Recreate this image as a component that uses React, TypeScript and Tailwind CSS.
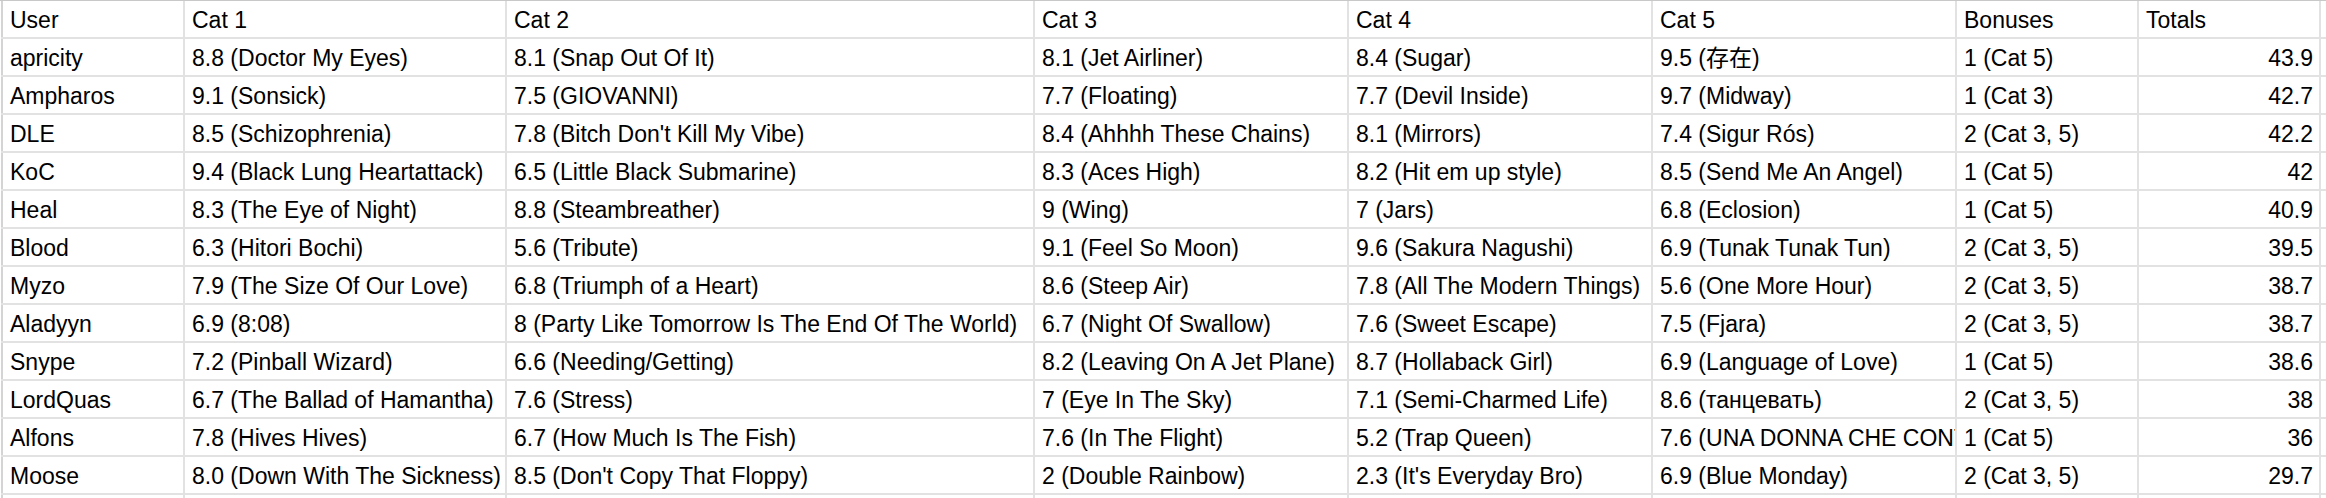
const columns = [
  { label: "User", width: "w-[182px]" },
  { label: "Cat 1", width: "w-[322px]" },
  { label: "Cat 2", width: "w-[528px]" },
  { label: "Cat 3", width: "w-[314px]" },
  { label: "Cat 4", width: "w-[304px]" },
  { label: "Cat 5", width: "w-[304px]" },
  { label: "Bonuses", width: "w-[182px]" },
  { label: "Totals", width: "w-[182px]" },
];

const rows: string[][] = [
  ["apricity", "8.8 (Doctor My Eyes)", "8.1 (Snap Out Of It)", "8.1 (Jet Airliner)", "8.4 (Sugar)", "9.5 (存在)", "1 (Cat 5)", "43.9"],
  ["Ampharos", "9.1 (Sonsick)", "7.5 (GIOVANNI)", "7.7 (Floating)", "7.7 (Devil Inside)", "9.7 (Midway)", "1 (Cat 3)", "42.7"],
  ["DLE", "8.5 (Schizophrenia)", "7.8 (Bitch Don't Kill My Vibe)", "8.4 (Ahhhh These Chains)", "8.1 (Mirrors)", "7.4 (Sigur Rós)", "2 (Cat 3, 5)", "42.2"],
  ["KoC", "9.4 (Black Lung Heartattack)", "6.5 (Little Black Submarine)", "8.3 (Aces High)", "8.2 (Hit em up style)", "8.5 (Send Me An Angel)", "1 (Cat 5)", "42"],
  ["Heal", "8.3 (The Eye of Night)", "8.8 (Steambreather)", "9 (Wing)", "7 (Jars)", "6.8 (Eclosion)", "1 (Cat 5)", "40.9"],
  ["Blood", "6.3 (Hitori Bochi)", "5.6 (Tribute)", "9.1 (Feel So Moon)", "9.6 (Sakura Nagushi)", "6.9 (Tunak Tunak Tun)", "2 (Cat 3, 5)", "39.5"],
  ["Myzo", "7.9 (The Size Of Our Love)", "6.8 (Triumph of a Heart)", "8.6 (Steep Air)", "7.8 (All The Modern Things)", "5.6 (One More Hour)", "2 (Cat 3, 5)", "38.7"],
  ["Aladyyn", "6.9 (8:08)", "8 (Party Like Tomorrow Is The End Of The World)", "6.7 (Night Of Swallow)", "7.6 (Sweet Escape)", "7.5 (Fjara)", "2 (Cat 3, 5)", "38.7"],
  ["Snype", "7.2 (Pinball Wizard)", "6.6 (Needing/Getting)", "8.2 (Leaving On A Jet Plane)", "8.7 (Hollaback Girl)", "6.9 (Language of Love)", "1 (Cat 5)", "38.6"],
  ["LordQuas", "6.7 (The Ballad of Hamantha)", "7.6 (Stress)", "7 (Eye In The Sky)", "7.1 (Semi-Charmed Life)", "8.6 (танцевать)", "2 (Cat 3, 5)", "38"],
  ["Alfons", "7.8 (Hives Hives)", "6.7 (How Much Is The Fish)", "7.6 (In The Flight)", "5.2 (Trap Queen)", "7.6 (UNA DONNA CHE CONTA)", "1 (Cat 5)", "36"],
  ["Moose", "8.0 (Down With The Sickness)", "8.5 (Don't Copy That Floppy)", "2 (Double Rainbow)", "2.3 (It's Everyday Bro)", "6.9 (Blue Monday)", "2 (Cat 3, 5)", "29.7"],
  ["", "", "", "", "", "", "", ""],
];

const Row = ({ cells, header = false }: { cells: string[]; header?: boolean }) => (
  <div className="flex h-[38px] border-b-2 border-[#e2e2e2]">
    {cells.map((text, i) => (
      <div
        key={i}
        className={`${columns[i].width} shrink-0 flex items-end overflow-hidden whitespace-nowrap border-l-2 ${
          i === 0 ? "border-[#d4d4d4]" : "border-[#e2e2e2]"
        } pb-[5px] ${i === 7 && !header ? "justify-end pr-[6px]" : "pl-[7px]"}`}
      >
        {text}
      </div>
    ))}
    <div className="flex-1 border-l-2 border-[#e2e2e2]" />
  </div>
);

export default function App() {
  return (
    <div
      className="w-[2326px] h-[498px] overflow-hidden bg-white text-black text-[23px] leading-[23px] pl-px border-t border-[#c8c8c8]"
      style={{ fontFamily: "'Liberation Sans', 'Noto Sans CJK JP', sans-serif" }}
    >
      <Row cells={columns.map((c) => c.label)} header />
      {rows.map((r, i) => (
        <Row key={i} cells={r} />
      ))}
    </div>
  );
}
